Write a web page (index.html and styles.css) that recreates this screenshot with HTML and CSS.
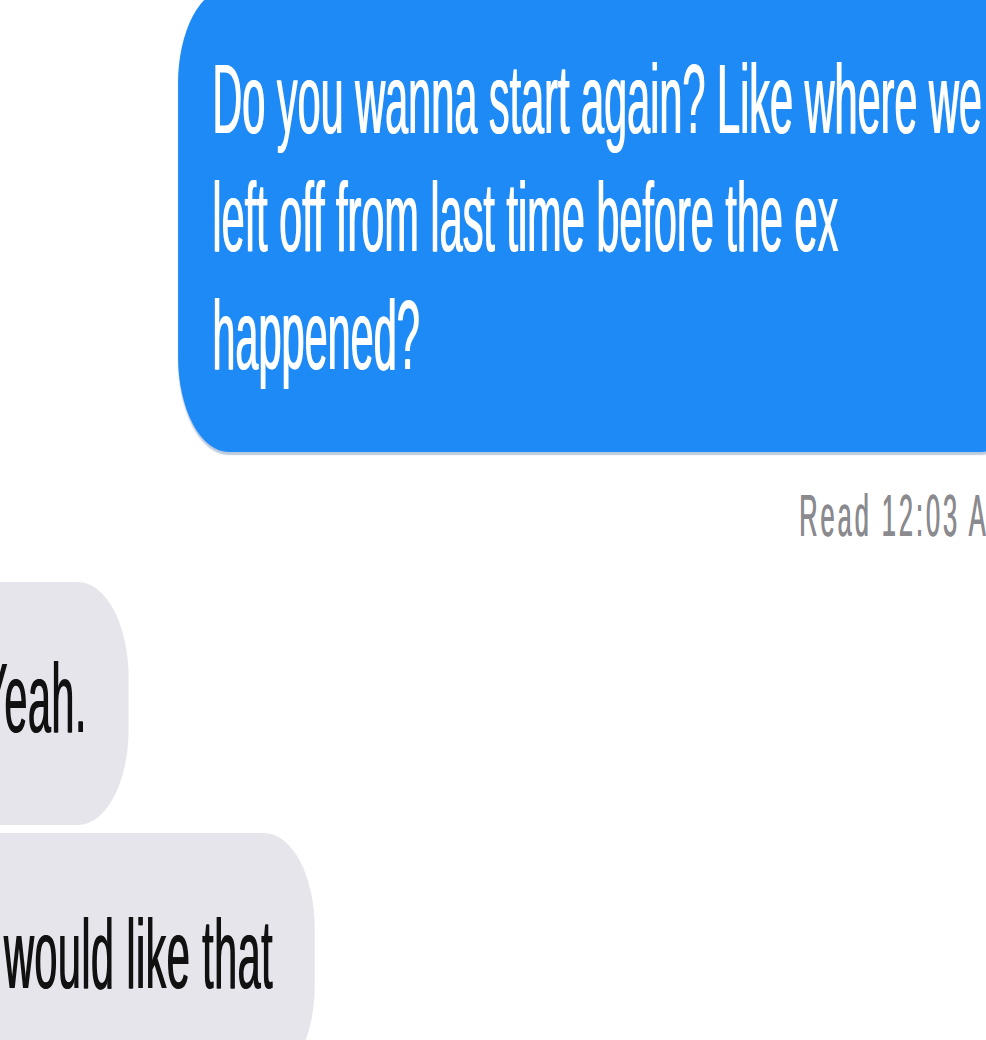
FILE: index.html
```html
<!DOCTYPE html>
<html lang="en">
<head>
<meta charset="utf-8">
<title>Messages</title>
<link rel="stylesheet" href="styles.css">
</head>
<body>
<div class="screen">
  <div class="row row-out">
    <div class="bubble bubble-out">Do you wanna start again? Like where we left off from last time before the ex happened?</div>
  </div>
  <div class="receipt">Read 12:03 AM</div>
  <div class="row row-in first">
    <div class="bubble bubble-in">Yeah.</div>
  </div>
  <div class="row row-in second">
    <div class="bubble bubble-in">I would like that</div>
  </div>
</div>
</body>
</html>
```
FILE: styles.css
```css
html, body {
  margin: 0;
  padding: 0;
  background: #ffffff;
  overflow: hidden;
  width: 986px;
  height: 1040px;
}

.screen {
  width: 2331px;
  transform: scaleX(0.423);
  transform-origin: 0 0;
  font-family: "Liberation Sans", Arial, sans-serif;
  display: flex;
  flex-direction: column;
  align-items: flex-start;
}

.row {
  display: flex;
  width: 100%;
}

.bubble {
  font-size: 98px;
  line-height: 118px;
  border-radius: 120px / 95px;
  white-space: normal;
}

.bubble-out {
  margin-top: -12px;
  margin-left: 421px;
  width: 1850px;
  flex: none;
  padding: 52px 88px 58px 80px;
  background: #1e8af5;
  color: #ffffff;
  text-shadow: 2px 0 0 #ffffff;
  box-shadow: 0 3px 2px rgba(10, 60, 140, 0.28);
}

.receipt {
  margin-top: 29px;
  padding-left: 1889px;
  white-space: nowrap;
  font-size: 60px;
  line-height: 70px;
  letter-spacing: 7px;
  color: #8a8a8f;
  text-shadow: 1px 0 0 #8a8a8f;
}

.bubble-in {
  flex: none;
  margin-left: -154px;
  padding: 57px 100px 68px 106px;
  background: #e6e5ec;
  color: #111111;
  letter-spacing: 1px;
  text-shadow: 2px 0 0 #111111;
  white-space: nowrap;
}

.first {
  margin-top: 31px;
}

.second {
  margin-top: 8px;
}

.second .bubble-in {
  padding-top: 62px;
}
```
